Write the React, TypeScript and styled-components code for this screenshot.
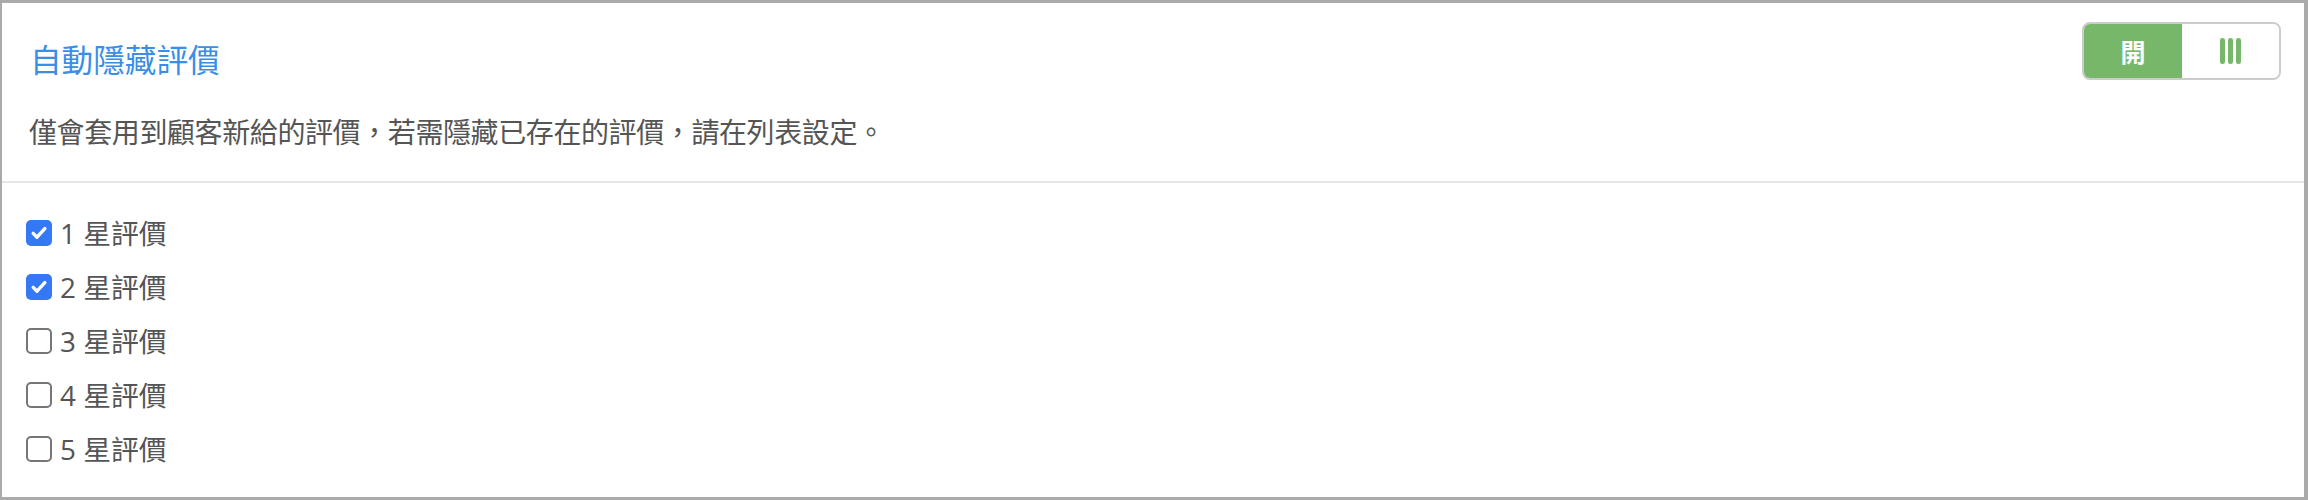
import styled, { createGlobalStyle } from 'styled-components';

const GlobalStyle = createGlobalStyle`
  html, body {
    margin: 0;
    padding: 0;
    background: #ffffff;
  }
  body {
    font-family: "Open Sans", "Noto Sans CJK TC", sans-serif;
  }
`;

const ratings = [
  { star: 1, checked: true },
  { star: 2, checked: true },
  { star: 3, checked: false },
  { star: 4, checked: false },
  { star: 5, checked: false },
];

export default function App() {
  return (
    <>
      <GlobalStyle />
      <Card>
        <Header>
          <HeaderRow>
            <Title>自動隱藏評價</Title>
            <Toggle>
              <ToggleOn>開</ToggleOn>
              <ToggleOff>
                <Bar />
                <Bar />
                <Bar />
              </ToggleOff>
            </Toggle>
          </HeaderRow>
          <Description>
            僅會套用到顧客新給的評價，若需隱藏已存在的評價，請在列表設定。
          </Description>
        </Header>
        <List>
          {ratings.map((r) => (
            <Row key={r.star}>
              <Box $checked={r.checked}>
                {r.checked && (
                  <svg width="18" height="18" viewBox="0 0 18 18">
                    <path
                      d="M3.2 9.4 L7 13.2 L14.8 4.6"
                      fill="none"
                      stroke="#ffffff"
                      strokeWidth="3.4"
                      strokeLinecap="round"
                      strokeLinejoin="round"
                    />
                  </svg>
                )}
              </Box>
              <Label>{r.star} 星評價</Label>
            </Row>
          ))}
        </List>
      </Card>
    </>
  );
}

const Card = styled.div`
  box-sizing: border-box;
  width: 2308px;
  height: 500px;
  border: 3px solid #aaaaaa;
  border-left-width: 2px;
  border-right-width: 4px;
  background: #ffffff;
`;

const Header = styled.div`
  padding: 19px 23px 29px 26px;
  border-bottom: 2px solid #e6e6e6;
`;

const HeaderRow = styled.div`
  display: flex;
  justify-content: space-between;
  align-items: flex-start;
`;

const Title = styled.div`
  margin-top: 18px;
  padding-left: 2px;
  font-size: 31.6px;
  line-height: 40px;
  color: #3a8ee6;
`;

const Toggle = styled.div`
  box-sizing: border-box;
  display: flex;
  width: 199px;
  height: 58px;
  border: 2px solid #cccccc;
  border-radius: 8px;
  overflow: hidden;
`;

const ToggleOn = styled.div`
  width: 98px;
  display: flex;
  align-items: center;
  justify-content: center;
  background: #77b769;
  color: #ffffff;
  font-size: 25px;
  font-weight: 700;
`;

const ToggleOff = styled.div`
  flex: 1;
  display: flex;
  align-items: center;
  justify-content: center;
  gap: 3.2px;
  background: #ffffff;
`;

const Bar = styled.span`
  width: 4.6px;
  height: 26px;
  border-radius: 2.3px;
  background: #77b769;
`;

const Description = styled.div`
  margin-top: 32px;
  padding-left: 1px;
  font-size: 28px;
  letter-spacing: -0.4px;
  line-height: 40px;
  color: #555555;
`;

const List = styled.div`
  display: flex;
  flex-direction: column;
  padding: 23px 0 0 24px;
`;

const Row = styled.div`
  display: flex;
  align-items: center;
  gap: 8px;
  height: 54px;
`;

const Box = styled.span<{ $checked: boolean }>`
  box-sizing: border-box;
  width: 26px;
  height: 26px;
  display: flex;
  align-items: center;
  justify-content: center;
  border-radius: 5px;
  background: ${(p) => (p.$checked ? '#3478f6' : '#ffffff')};
  border: ${(p) => (p.$checked ? 'none' : '2px solid #767676')};
`;

const Label = styled.span`
  font-size: 27.8px;
  line-height: 40px;
  color: #555555;
`;
